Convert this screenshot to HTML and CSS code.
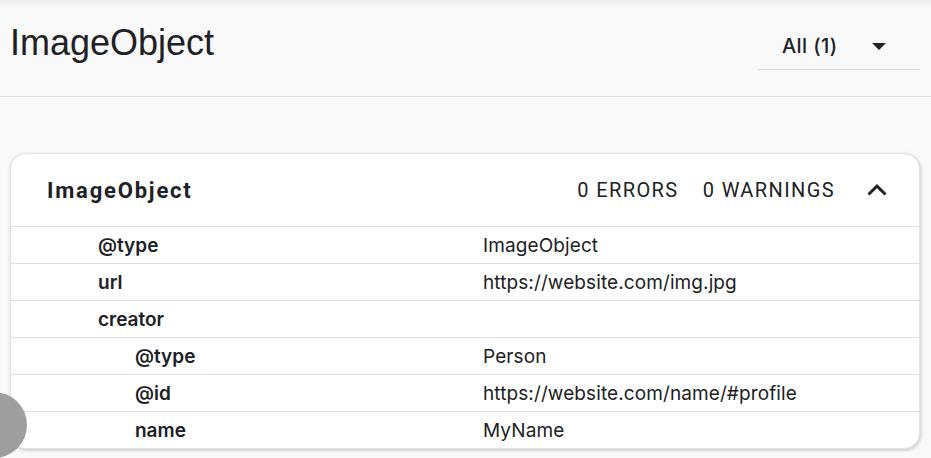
FILE: index.html
```html
<!DOCTYPE html>
<html lang="en">
<head>
    <meta charset="UTF-8">
    <meta name="viewport" content="width=device-width, initial-scale=1.0">
    <link rel="stylesheet" href="styles.css">
    <title>ImageObject</title>
</head>
<body>
    <div id="topbar">
        <h1 id="page-title">ImageObject</h1>
        <div id="filter">
            <span>All (1)</span>
            <svg class="caret" width="14" height="7" viewBox="0 0 14 7"><path d="M0 0h14L7 7z" fill="#202124"/></svg>
        </div>
    </div>

    <div id="content">
        <div class="card">
            <div class="card-head">
                <div class="card-title">ImageObject</div>
                <div class="counts">
                    <span>0 ERRORS</span>
                    <span>0 WARNINGS</span>
                </div>
                <svg class="chevron" width="24" height="24" viewBox="0 0 24 24"><path d="M3.5 16.5L12 8l8.5 8.5" fill="none" stroke="#202124" stroke-width="3"/></svg>
            </div>

            <div class="row">
                <div class="key">@type</div>
                <div class="value">ImageObject</div>
            </div>
            <div class="row">
                <div class="key">url</div>
                <div class="value">https://website.com/img.jpg</div>
            </div>
            <div class="row">
                <div class="key">creator</div>
                <div class="value"></div>
            </div>
            <div class="row nested">
                <div class="key">@type</div>
                <div class="value">Person</div>
            </div>
            <div class="row nested">
                <div class="key">@id</div>
                <div class="value">https://website.com/name/#profile</div>
            </div>
            <div class="row nested last">
                <div class="key">name</div>
                <div class="value">MyName</div>
            </div>
        </div>
    </div>

    <div id="fab"></div>
</body>
</html>
```

FILE: styles.css
```css
body {
    margin: 0;
    height: 458px;
    overflow: hidden;
    background-color: #f9f9f9;
    font-family: Inter, "Noto Sans", sans-serif;
    color: #202124;
}

#topbar {
    display: flex;
    align-items: center;
    justify-content: space-between;
    height: 96px;
    padding: 0 11px 0 10px;
    border-bottom: 1px solid #e0e0e0;
    background: linear-gradient(to bottom, #ececec 0px, #f9f9f9 9px);
}

#page-title {
    margin: 0;
    margin-top: -10px;
    font-family: "Liberation Sans", Arial, sans-serif;
    font-size: 36px;
    font-weight: normal;
    color: #202124;
}

#filter {
    display: flex;
    align-items: center;
    justify-content: space-between;
    width: 162px;
    height: 48px;
    margin-top: -4px;
    padding: 0 34px 0 24px;
    box-sizing: border-box;
    border-bottom: 1px solid #dcdcdc;
    font-size: 20px;
    font-weight: 500;
    letter-spacing: 0.4px;
}

#filter .caret {
    margin-top: 1px;
}

#content {
    padding: 56px 11px 0 10px;
}

.card {
    background-color: #ffffff;
    border: 1px solid #e3e3e3;
    border-radius: 16px;
    box-shadow: 0 1px 4px rgba(0, 0, 0, 0.12), 2px 2px 3px rgba(0, 0, 0, 0.08);
}

.card-head {
    display: flex;
    align-items: center;
    height: 72px;
    padding: 0 30px 0 36px;
    border-bottom: 1px solid #e0e0e0;
}

.card-title {
    flex: 1;
    font-family: Roboto, sans-serif;
    font-size: 22px;
    font-weight: bold;
    letter-spacing: 1.8px;
}

.counts {
    display: flex;
    gap: 24px;
    font-family: Roboto, sans-serif;
    font-size: 20px;
    letter-spacing: 1.4px;
}

.chevron {
    margin-left: 30px;
}

.row {
    display: flex;
    align-items: center;
    height: 36px;
    border-bottom: 1px solid #e0e0e0;
    font-size: 19px;
}

.row.last {
    border-bottom: none;
}

.key {
    width: 385px;
    padding-left: 87px;
    font-weight: 600;
}

.row.nested .key {
    width: 348px;
    padding-left: 124px;
}

.value {
    flex: 1;
    letter-spacing: 0.1px;
}

#fab {
    position: fixed;
    left: -39px;
    top: 392px;
    width: 66px;
    height: 66px;
    border-radius: 50%;
    background-color: #9e9e9e;
}
```
